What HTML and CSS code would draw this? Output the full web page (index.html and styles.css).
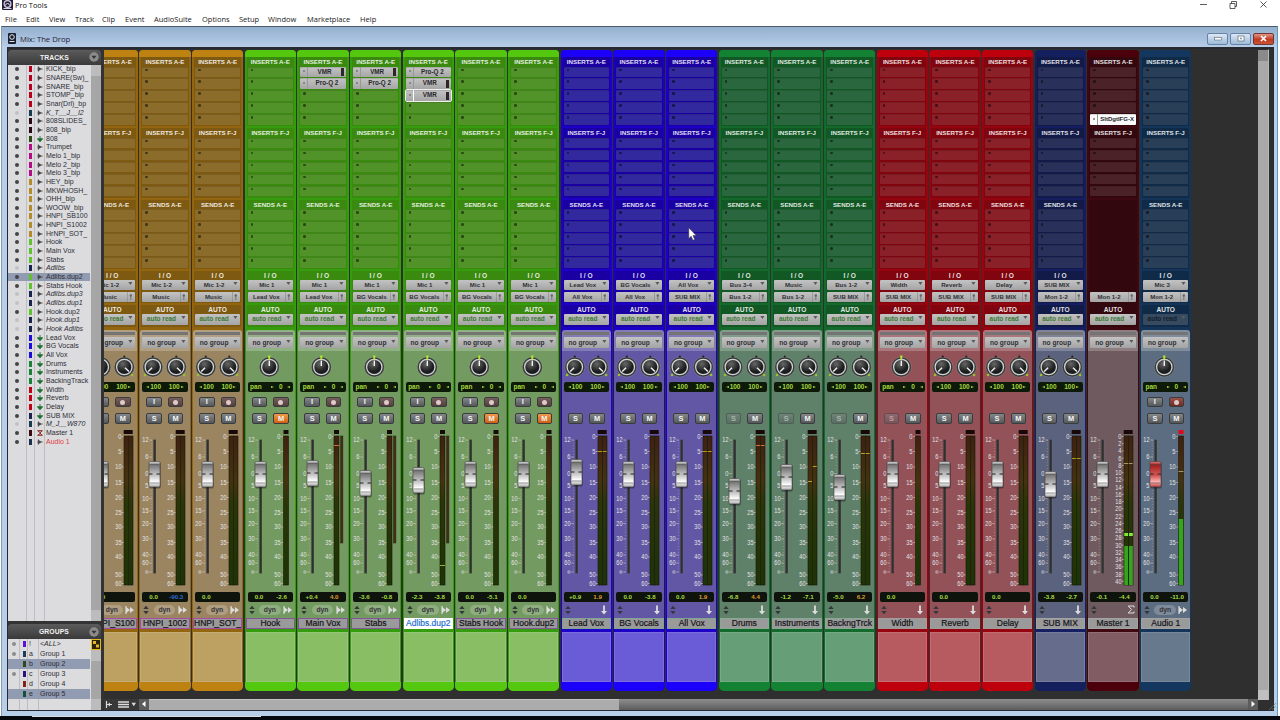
FILE: index.html
```html
<!DOCTYPE html>
<html lang="en">
<head>
<meta charset="utf-8">
<title>Pro Tools</title>
<link rel="stylesheet" href="styles.css">
</head>
<body>
<header class="app-title">
  <svg class="app-icon" width="11" height="11" viewBox="0 0 11 11"><rect width="11" height="11" rx="1" fill="#241f38"/><circle cx="5.5" cy="5" r="3.4" fill="none" stroke="#d8d4e6" stroke-width="1.2"/><path d="M3.5 6.5a2 2 0 0 1 4 0M1.5 9.5h8" stroke="#d8d4e6" fill="none"/></svg>
  <span>Pro Tools</span>
  <svg class="app-controls" width="72" height="10" viewBox="0 0 72 10" fill="none" stroke="#333" stroke-width=".8"><path d="M1 4.5h7M31 3.5h5v5h-5zM32.5 3.5v-2h5v5h-1.5M61.500 1.500l6 6M67.500 1.500l-6 6"/></svg>
</header>
<nav class="menu">
  <span>File</span><span>Edit</span><span>View</span><span>Track</span><span>Clip</span><span>Event</span><span>AudioSuite</span><span>Options</span><span>Setup</span><span>Window</span><span>Marketplace</span><span>Help</span>
</nav>
<main class="window">
  <div class="titlebar">
    <svg width="8" height="11" viewBox="0 0 8 11"><rect width="8" height="11" rx="1" fill="#1b2030"/><circle cx="4" cy="4" r="2.3" fill="none" stroke="#dfe6f0"/><path d="M1.500 8.500h5" stroke="#dfe6f0"/></svg>
    <span>Mix: The Drop</span>
    <div class="wbtns">
      <i class="wbtn"><svg width="8" height="5"><rect x=".5" y="1.500" width="7" height="2.500" fill="#fff" stroke="#567" stroke-width=".6"/></svg></i>
      <i class="wbtn"><svg width="8" height="7"><rect x="1" y="1" width="6" height="5" fill="#fff" stroke="#567" stroke-width=".7"/><rect x="3" y="2.700" width="2" height="1.600" fill="#89a"/></svg></i>
      <i class="wbtn close"><svg width="7" height="7"><path d="M1 1l5 5M6 1l-5 5" stroke="#fff" stroke-width="1.700"/></svg></i>
    </div>
  </div>
  <div class="content">
    <aside class="side">
      <div class="side-head">TRACKS<svg width="10" height="10"><circle cx="5" cy="5" r="4.700" fill="#8b8b8b"/><path d="M2.500 3.700h5L5 7z" fill="#333"/></svg></div>
      <div class="list tracks"><div class="rows" id="tracks"></div><div class="sb"><b></b><em></em></div></div>
      <div class="side-head groups-head">GROUPS<svg width="10" height="10"><circle cx="5" cy="5" r="4.700" fill="#8b8b8b"/><path d="M2.500 3.700h5L5 7z" fill="#333"/></svg></div>
      <div class="list groups"><div class="rows" id="groups"></div><div class="sb"><svg width="10" height="11"><rect width="10" height="11" fill="#e5b91c"/><path d="M1 1h8v9H1z" fill="#2b230a"/><path d="M2 2h3v3H2zM5 5.500h3v3H5z" fill="#e5b91c"/></svg><b></b><em></em></div></div>
    </aside>
    <section class="mixer">
      <div class="strips-view"><div class="strips" id="strips"></div></div>
      <div class="hbar">
        <svg width="34" height="11" viewBox="0 0 34 11"><path d="M1.500 2v7M2 5.500h5" stroke="#ddd" stroke-width="1.200"/><path d="M2.500 5.500l2.500-2v4z" fill="#ddd"/><path d="M13 3h11M13 5.500h11M13 8h11" stroke="#ddd" stroke-width="1.500"/><path d="M26.500 3.700h4.500l-2.200 3.600z" fill="#ddd"/></svg>
        <i class="arr"><svg width="10" height="10"><path d="M6.500 2v6L3 5z" fill="#fff"/></svg></i>
        <i class="thumb"></i><i class="rail"></i>
        <i class="arr"><svg width="10" height="10"><path d="M3.500 2v6L7 5z" fill="#fff"/></svg></i>
      </div>
    </section>
    <div class="vbar"><i></i><b></b></div>
    <div class="grip"><svg width="7" height="8"><path d="M0 8L7 1M3 8l4-4" stroke="#777" stroke-width=".6"/></svg></div>
  </div>
</main>
<footer class="taskbar"><i></i></footer>
<svg class="cursor" width="9" height="14" viewBox="0 0 9 14"><path d="M.8.8v10.700l2.400-2.300 1.700 4 1.800-.8-1.700-3.800h3.200z" fill="#fff" stroke="#333" stroke-width=".5"/></svg>
<script src="app.js"></script>
</body>
</html>
```
FILE: styles.css
```css
* { box-sizing: border-box; }
body { margin: 0; width: 1280px; height: 720px; overflow: hidden; background: #fff; font-family: "Liberation Sans", Arial, sans-serif; display: flex; flex-direction: column; }
svg { display: block; flex: none; }
i { font-style: normal; }

.app-title { height: 12px; flex: none; display: flex; align-items: flex-start; padding-left: 2px; font: 8px/10px "Open Sans", "Noto Sans", sans-serif; color: #111; }
.app-icon { margin-top: -1px; }
.app-title span { margin-left: 2px; width: 100px; font-size: 7.400px; }
.app-controls { margin-left: auto; margin-right: 9px; }
.menu { height: 14px; flex: none; display: grid; grid-template-columns: 21px 23px 26px 27px 23px 29px 48px 37px 29px 39px 53px 30px; padding-left: 5px; font: 7.500px/14px "Open Sans", "Noto Sans", sans-serif; color: #222; }

.window { height: 690px; flex: none; margin: 0 2px 0 1px; border-top: 1px solid #4c5a69; border-left: 1px solid #8a9bb0; border-right: 1px solid #5c9cb8; background: #b8cfe9; padding: 0 3px 5px 5px; display: flex; flex-direction: column; }
.titlebar { height: 20px; flex: none; display: flex; align-items: center; margin: 0 -3px 0 -5px; padding: 3px 3px 0 6px; background: linear-gradient(#94b0cf, #b7cce7); font: 7.700px/12px "Open Sans", "Noto Sans", sans-serif; color: #223; }
.titlebar span { margin-left: 4px; }
.wbtns { margin-left: auto; display: flex; gap: 2px; }
.wbtn { width: 21px; height: 12px; border: 1px solid #6683a5; border-radius: 2px; background: linear-gradient(#dce8f5, #9ebad8); display: flex; align-items: center; justify-content: center; }
.wbtn.close { border-color: #743434; background: linear-gradient(#e09585, #c23920 55%, #c75536); }

.content { flex: 1; min-height: 0; display: grid; grid-template-columns: 96px 1154px 11px 1fr; background: #2f2f2f; border: 1px solid #262a30; border-top-width: 2px; }
.side { display: flex; flex-direction: column; padding-right: 3px; background: #333; min-height: 0; }
.side-head { height: 15.500px; flex: none; margin-top: .5px; border-radius: 4px 4px 0 0; background: linear-gradient(#5b5b5b, #3a3a3a); color: #f2f2f2; font-weight: bold; font-size: 6.800px; display: flex; align-items: center; justify-content: flex-end; gap: 20px; padding-right: 2px; letter-spacing: .1px; }
.groups-head { margin-top: 3px; height: 15px; }
.list { display: flex; overflow: hidden; background: #dcdcdf; }
.tracks { height: 556px; }
.groups { flex: 1; }
.rows { flex: 1; background: linear-gradient(90deg, transparent 18px, #bdbdc2 18px 19px, transparent 19px 26px, #bdbdc2 26px 27px, transparent 27px 36px, #bdbdc2 36px 37px, transparent 37px); }
.groups .rows { background: linear-gradient(90deg, transparent 11px, #bdbdc2 11px 12px, transparent 12px 19px, #bdbdc2 19px 20px, transparent 20px 30px, #bdbdc2 30px 31px, transparent 31px); }
.row { height: 8.670px; display: grid; grid-template-columns: 21px 8px 9px 1fr; align-items: center; font-size: 7px; line-height: 8px; color: #2c2c34; white-space: nowrap; }
.row svg { height: 6px; }
.row .dot { width: 4px; height: 4px; border-radius: 50%; background: #444; margin-left: 7px; }
.row .chip { width: 3px; height: 6px; }
.off { font-style: italic; }
.off .dot { background: #c2c2c6; }
.sel { background: #919bb1; margin-right: 1px; }
.armed span { color: #e23b3b; }
.grow { height: 10px; display: grid; grid-template-columns: 15px 6px 11px 1fr; align-items: center; font-size: 7px; line-height: 10px; color: #2c2c34; }
.grow .dot { width: 4px; height: 4px; border-radius: 50%; background: #8c8c90; margin-left: 4px; }
.grow .chip { width: 3px; height: 6px; }
.sb { width: 10px; background: #a6a6a6; display: flex; flex-direction: column; justify-content: space-between; }
.sb b, .sb em { height: 11px; background: #bcbcbf; }
.groups .sb b { margin-bottom: auto; }

.mixer { display: flex; flex-direction: column; min-width: 0; min-height: 0; background: #2f2f2f; }
.strips-view { height: 650px; flex: none; overflow: hidden; }
.strips { display: flex; margin-left: -17.300px; padding-top: 1px; width: 1120px; }
.strip { width: 51.180px; margin-right: 1.500px; height: 641px; flex: none; display: flex; flex-direction: column; background: var(--edge); border-radius: 4px 4px 5px 5px; overflow: hidden; }
.orange { --cap: #bd8211; --edge: #94650f; --sec: #7d5911; --slot: #8b6c2b; --low: #9b8561; --note: #bca163; --plate: #a74ba9; }
.lime { --cap: #54c80e; --edge: #349c0d; --sec: #3b8a10; --slot: #519328; --low: #739a60; --note: #89be65; --plate: #84549a; }
.blue { --cap: #1b00fa; --edge: #1c00c8; --sec: #1a00a2; --slot: #31299d; --low: #6157a5; --note: #6a5cd6; --plate: #7ea495; }
.green { --cap: #138233; --edge: #146a2d; --sec: #125824; --slot: #2b673e; --low: #5f8069; --note: #669e77; --plate: #86ab92; }
.red { --cap: #be000c; --edge: #96050f; --sec: #80050e; --slot: #8a2028; --low: #935158; --note: #b85b60; --plate: #a49a9b; }
.navy { --cap: #141f5e; --edge: #151e62; --sec: #121a48; --slot: #29315b; --low: #5b627e; --note: #666d8c; --plate: #a3a3a3; }
.maroon { --cap: #4b000b; --edge: #3f0710; --sec: #33070e; --slot: #4c2229; --low: #6f5a5f; --note: #815d63; --plate: #a3a3a3; }
.steel { --cap: #14375f; --edge: #14345a; --sec: #102b48; --slot: #293f57; --low: #5c6d81; --note: #67798c; --plate: #a3a3a3; }
.cap { height: 7px; flex: none; background: var(--cap); }
.sec { height: 71.400px; flex: none; margin: 0 2px; padding: 0 1px; background: var(--sec); border-bottom: 2px solid var(--edge); }
.sec.io { height: 33.500px; }
.sec.auto { height: 24px; }
.maroon .blank { background: var(--sec); border-color: var(--sec); }
.lab { height: 9.500px; line-height: 10px; text-align: center; font-weight: bold; font-size: 6.200px; color: rgba(255,255,255,.88); white-space: nowrap; }
.io .lab { height: 8.600px; font-size: 6.600px; }
.auto .lab { height: 9.600px; font-size: 6.600px; }
.slot { height: 10.400px; margin-bottom: 1.600px; background: var(--slot); border-radius: 1px; box-shadow: inset 0 1px 0 rgba(0,0,0,.12); padding: 2px 0 0 3px; }
.slot::before { content: ""; display: block; width: 2.600px; height: 2.600px; border-radius: 50%; background: rgba(0,0,0,.5); }
.slot.full { padding: 0; display: flex; align-items: center; background: linear-gradient(#c4c4c4, #a6a6a6); font-weight: bold; font-size: 6.300px; color: #28282c; white-space: nowrap; overflow: hidden; }
.slot.full::before { width: 2px; height: 2px; margin: -2px 2px 0 3px; background: #777; flex: none; }
.slot.full span { flex: 1; text-align: center; border-left: 1px solid #999; height: 100%; line-height: 10.500px; }
.slot.full u { width: 3px; height: 8px; background: #2c2626; margin-right: 2px; }
.slot.hot { outline: 1px solid #eee; }
.slot.hot span { border-left-color: #fff; }
.slot.white { background: #fafafa; font-size: 6px; }
.pick { height: 10.400px; margin-bottom: 1.600px; background: linear-gradient(#c3c3c3, #a4a4a4); border-radius: 1px; display: flex; align-items: center; font-size: 6.100px; font-weight: bold; color: #303036; white-space: nowrap; padding-right: 2px; }
.pick span { flex: 1; text-align: center; line-height: 10px; }
.pick.auto-mode { color: #3c7a33; font-size: 6.500px; }
.steel .auto-mode { background: #364a60; color: #14202e; }
.low { flex: none; height: 288px; margin: 1.100px 1px 0; background: var(--low); border-radius: 3px 3px 0 0; display: flex; flex-direction: column; }
.grp { height: 21px; margin-bottom: 1px; flex: none; padding: 2.500px 2px 0; background: rgba(255,255,255,.22); border-radius: 3px 3px 0 0; }
.grp hr { height: 2.500px; margin: 0 0 2.500px; border: 0; background: #747474; }
.grp .pick { height: 11px; font-size: 6.600px; }
.knobs { height: 30.500px; flex: none; }
.pan { height: 9.500px; flex: none; margin: 0 2px; border-radius: 2px; background: #0e1a08; color: #a5d83f; font-weight: bold; font-size: 6.500px; line-height: 10px; display: flex; justify-content: space-around; align-items: center; white-space: nowrap; }
.pan span { display: flex; align-items: center; gap: 1px; }
.tri { width: 0; height: 0; border: 1.800px solid transparent; }
.tri.l { border-right: 3px solid #a5d83f; border-left: 0; }
.tri.r { border-left: 3px solid #a5d83f; border-right: 0; }
.btns { height: 10.500px; flex: none; margin-top: 5px; display: flex; gap: 6px; padding-left: 6px; }
.btns.sm { margin-top: 6px; }
.btn { width: 15.500px; height: 10.500px; border: .6px solid #393b3d; border-radius: 2px; background: linear-gradient(#85888a, #55585b); color: #f4f4f4; font-size: 7.400px; font-weight: bold; line-height: 9.500px; text-align: center; display: flex; align-items: center; justify-content: center; }
.btn.rec { background: linear-gradient(#76605d, #523e3c); }
.btn.rec::before { content: ""; width: 5px; height: 5px; border-radius: 50%; background: #e0c9c9; }
.btn.rec.on { background: linear-gradient(#98534a, #6c2b24); }
.btn.mute { background: linear-gradient(#f09a4a, #cf5f14); }
.btn.dim { opacity: .45; }
.hid { visibility: hidden; }
.fader { height: 164.300px; flex: none; margin: 2.200px 0 0 -1px; }
.fader text { font-size: 7px; fill: #e4e4e4; }
.vals { height: 10px; flex: none; margin: 2px 2px 0; border-radius: 2px; background: #0e140c; color: #a5dc44; font-weight: bold; font-size: 6.200px; line-height: 10.500px; display: grid; grid-template-columns: 1fr 1fr; text-align: center; }
.vals .over { color: #dd9a34; }
.vals .low-v { color: #2f68d0; }
.foot { height: 15px; flex: none; display: flex; align-items: center; justify-content: space-between; padding: 0 3px; }
.foot span { width: 21.500px; height: 9.500px; margin-left: 2px; border-radius: 5px; background: rgba(255,255,255,.2); font-size: 6.800px; font-weight: bold; line-height: 9px; text-align: center; color: #34343a; }
.plate { height: 11px; flex: none; margin: 0 1px; border: 1px solid var(--plate); background: #9b9a9b; font-size: 8.500px; line-height: 9px; text-align: center; color: #141418; -webkit-text-stroke: .2px #141418; white-space: nowrap; overflow: hidden; display: flex; justify-content: center; }
.plate.cur { background: #fff; border-color: #fff; color: #2870d0; -webkit-text-stroke-color: #2870d0; }
.note { height: 50px; flex: none; margin: 3px 1px 0; background: var(--note); border: .5px solid rgba(255,255,255,.12); }
.tail { flex: 1; background: var(--cap); }

.hbar { height: 11px; flex: none; display: flex; padding-left: 1px; background: #383838; }
.arr { width: 10px; height: 11px; background: #5c5c5c; }
.thumb { width: 470px; background: #acacac; border-top: 1px solid #c3c3c3; }
.rail { flex: 1; background: linear-gradient(#8e8e8e, #5c5c5c); }
.vbar { height: 651px; background: #a9a9a9; border-top: 1px solid #2f2f2f; border-right: 1px solid #b9b9b9; display: flex; flex-direction: column; justify-content: space-between; }
.vbar i { height: 11px; background: #8a8a8a; }
.vbar b { height: 10px; background: #c0c0c0; }
.grip { display: flex; align-items: flex-end; justify-content: flex-end; }
.taskbar { height: 4px; flex: none; background: #05080c; padding-left: 32px; }
.taskbar i { display: block; width: 229px; height: 1px; background: #d8dce0; }
.cursor { position: absolute; left: 688px; top: 227px; }
```
FILE: app.js
```js
const tri = '<svg width="5" height="8"><path d="M.3 1h4.200L2.400 4z" fill="#5b5b5b"/></svg>';
const plug = '<svg width="6" height="10"><path d="M.3 0v10" stroke="#858585" stroke-width=".7"/><path d="M3.800 3v5" stroke="#666" stroke-width=".8"/><circle cx="3.800" cy="3.500" r="1.200" fill="#666"/></svg>';

// name, colour, kind (a = audio, x = aux, m = master), flags
const tracks = [
  ['KICK_bip','#b8001c','a'],['SNARE(Sw)_','#b8001c','a'],['SNARE_bip','#b8001c','a'],['STOMP_bip','#b8001c','a'],['Snar(Drl)_bp','#b8001c','a'],
  ['K_T__J__I2','#173a52','a','off'],['808SLIDES_','#2a0a12','a'],['808_bip','#2a0a12','a'],['808','#2b4a18','x'],
  ['Trumpet','#b50a86','a'],['Melo 1_bip','#b50a86','a'],['Melo 2_bip','#b50a86','a'],['Melo 3_bip','#b50a86','a'],
  ['HEY_bip','#b58a28','a'],['MKWHOSH_','#b58a28','a'],['OHH_bip','#b58a28','a'],['WOOW_bip','#b58a28','a'],['HNPI_SB100','#b58a28','a'],['HNPI_S1002','#b58a28','a'],['HrNPI_SOT_','#b58a28','a'],
  ['Hook','#5fc22c','a'],['Main Vox','#5fc22c','a'],['Stabs','#5fc22c','a'],['Adlibs','#18244e','a','off'],['Adlibs.dup2','#5fc22c','a','sel'],['Stabs Hook','#5fc22c','a'],
  ['Adlibs.dup3','#18244e','a','off'],['Adlibs.dup1','#18244e','a','off'],['Hook.dup2','#5fc22c','a'],['Hook.dup1','#18244e','a','off'],['Hook Adlibs','#18244e','a','off'],
  ['Lead Vox','#1c0cdc','x'],['BG Vocals','#1c0cdc','x'],['All Vox','#1c0cdc','x'],['Drums','#1a8038','x'],['Instruments','#1a8038','x'],['BackingTrack','#1a8038','x'],
  ['Width','#c00014','x'],['Reverb','#c00014','x'],['Delay','#c00014','x'],['SUB MIX','#18244e','x'],['M_J__W870','#173a52','a','off'],['Master 1','#3a0a12','m'],['Audio 1','#18304e','a','armed']
];
const kind = {
  a: '<svg width="6" height="6"><path d="M1.300 .5v5" stroke="#333" stroke-width=".9"/><path d="M0 3h6M1.500 1.300L4.500 3l-3 1.700z" fill="#444" stroke="#444" stroke-width=".5"/></svg>',
  x: '<svg width="6" height="6"><path d="M3 0v5M.3 2.700h5.400L3 5.800z" fill="#1f7030" stroke="#1f7030" stroke-width=".9"/></svg>',
  m: '<svg width="6" height="6"><path d="M.3.7h5.400M.3 5.300h5.400M1 1l3 2-3 2M5 1L2.500 3 5 5" stroke="#8a2a24" fill="none"/></svg>'
};
document.getElementById('tracks').innerHTML = tracks.map(([n, c, k, f = '']) =>
  `<div class="row ${f}"><i class="dot"></i><i class="chip" style="background:${c}"></i>${kind[k]}<span>${n}</span></div>`).join('');
document.getElementById('groups').innerHTML = [['!','&lt;ALL&gt;','#5a10d8',1],['a','Group 1','#1c3c5c',1],['b','Group 2','#2c4a20',0,'sel'],['c','Group 3','#2a1080',1],['d','Group 4','#842018',0],['e','Group 5','#14503c',0,'sel']].map(([l, n, c, d, s = '']) =>
  `<div class="grow ${s}"><i class="${d ? 'dot' : ''}"></i><i class="chip" style="background:${c}"></i><span>${l}</span><span${l === '!' ? ' class="off"' : ''}>${n}</span></div>`).join('');

// n name, c colour, in/out routing, p pan (1 = mono knob), b input/record buttons, f fader centre, v values
const strips = [
  {n:'HNPI_S100',c:'orange',i:'Mic 1-2',o:'Music',b:1,f:474,v:['0.0','']},
  {n:'HNPI_1002',c:'orange',i:'Mic 1-2',o:'Music',b:1,f:474,v:['0.0','-90.3']},
  {n:'HNPI_SOT_',c:'orange',i:'Mic 1-2',o:'Music',b:1,f:474,v:['0.0','']},
  {n:'Hook',c:'lime',i:'Mic 1',o:'Lead Vox',p:1,b:1,mute:1,f:474,v:['0.0','-2.6']},
  {n:'Main Vox',c:'lime',i:'Mic 1',o:'Lead Vox',p:1,b:1,f:473,v:['+0.4','4.0'],ins:['VMR|','Pro-Q 2'],gr:1,pk:[[445,0,'#d07038']]},
  {n:'Stabs',c:'lime',i:'Mic 1',o:'BG Vocals',p:1,b:1,f:483,v:['-3.6','-0.8'],ins:['VMR|','Pro-Q 2'],gr:1},
  {n:'Adlibs.dup2',c:'lime',i:'Mic 1',o:'BG Vocals',p:1,b:1,f:480,v:['-2.3','-3.8'],ins:['Pro-Q 2','VMR|','VMR|*'],gr:1,cur:1,pk:[[565,0,'#a0b030']]},
  {n:'Stabs Hook',c:'lime',i:'Mic 1',o:'BG Vocals',p:1,b:1,mute:1,f:474,v:['0.0','-5.1']},
  {n:'Hook.dup2',c:'lime',i:'Mic 1',o:'BG Vocals',p:1,b:1,mute:1,f:474,v:['0.0','']},
  {n:'Lead Vox',c:'blue',i:'Lead Vox',o:'All Vox',f:472,v:['+0.9','1.9'],pk:[[451,0,'#b89a20'],[451,1,'#b89a20']]},
  {n:'BG Vocals',c:'blue',i:'BG Vocals',o:'All Vox',f:474,v:['0.0','-3.8']},
  {n:'All Vox',c:'blue',i:'All Vox',o:'SUB MIX',f:474,v:['0.0','1.9'],pk:[[451,0,'#b89a20'],[451,1,'#b89a20']]},
  {n:'Drums',c:'green',i:'Bus 3-4',o:'Bus 1-2',dim:1,f:491,v:['-6.8','4.4'],pk:[[445,0,'#d07038'],[445,1,'#d07038']]},
  {n:'Instruments',c:'green',i:'Music',o:'Bus 1-2',dim:1,f:477,v:['-1.2','-7.1'],pk:[[481,0,'#c0a020'],[466,1,'#c0a020']]},
  {n:'BackngTrck',c:'green',i:'Bus 1-2',o:'SUB MIX',dim:1,f:487,v:['-5.0','6.2'],pk:[[453,0,'#c0a020'],[453,1,'#c0a020']]},
  {n:'Width',c:'red',i:'Width',o:'SUB MIX',p:1,dim:1,f:474,v:['0.0','']},
  {n:'Reverb',c:'red',i:'Reverb',o:'SUB MIX',f:474,v:['0.0','']},
  {n:'Delay',c:'red',i:'Delay',o:'SUB MIX',f:474,v:['0.0','']},
  {n:'SUB MIX',c:'navy',i:'SUB MIX',o:'Mon 1-2',f:484,v:['-3.8','-2.7'],pk:[[458,0,'#a89a20'],[458,1,'#a89a20']]},
  {n:'Master 1',c:'maroon',o:'Mon 1-2',master:1,f:474,v:['-0.1','-4.4'],ins:['','','','','SltDgtlFG-X'],pk:[[463,0,'#a89a60'],[463,1,'#a89a60']],lvl:546},
  {n:'Audio 1',c:'steel',i:'Mic 3',o:'Mon 1-2',p:1,b:1,rec:1,f:474,v:['0.0','-11.0'],pk:[[471,0,'#a89a60']],lvl:519}
];
const slots = (a = []) => [0, 1, 2, 3, 4].map(k => {
  const t = a[k];
  if (!t) return '<div class="slot"></div>';
  return `<div class="slot full ${t.includes('*') ? 'hot' : ''} ${t.startsWith('Slt') ? 'white' : ''}"><span>${t.replace(/[|*]/g, '')}</span>${t.includes('|') ? '<u></u>' : ''}</div>`;
}).join('');
const sec = (l, a) => `<div class="sec"><div class="lab">${l}</div>${slots(a)}</div>`;

const knob = (x, a) => {
  const r = a * Math.PI / 180, s = Math.sin(r), c = -Math.cos(r);
  return `<circle cx="${x}" cy="15" r="10" fill="#383b39" stroke="rgba(255,255,255,.25)" stroke-width=".6"/><circle cx="${x}" cy="15" r="7.700" fill="url(#kg)" stroke="#d0d3d3" stroke-width="1.300"/>
  <path d="M${x + s} ${15 + c}L${x + s * 6.5} ${15 + c * 6.5}" stroke="#f4f4f4" stroke-width="1.400"/>` +
  (a ? `<circle cx="${x + s * 11}" cy="23" r="1.300" fill="#9ac32c"/><circle cx="${x}" cy="4.500" r="1.100" fill="#222"/>` : `<path d="M${x - 1.2} 3.500h2.400l-.4 4h-1.600z" fill="#b2e82a"/>`);
};
const left = [[12,440],[6,457],[0,473.500],[5,485.500],[10,498.500],[15,511],[20,523.500],[30,539],[40,555],[60,563],['∞',572]];
const right = [[0,436.500],[5,451.500],[10,467],[15,482.500],[20,497.500],[25,512.500],[30,527],[35,542.500],[40,557],[50,575],[60,583.500]];
// scale figures are set condensed, right-aligned to x
const figure = (x, y, t) => {
  const w = String(t).length > 1 ? 6.2 : 3.2;
  return `<text x="${x - w}" y="${y}" textLength="${w}" lengthAdjust="spacingAndGlyphs">${t}</text>`;
};
function fader(s) {
  const Y = y => y - 426, mono = s.p, mx = mono ? (s.gr ? 37 : 38.5) : 37;
  let o = `<svg class="fader" width="51" height="164.300" viewBox="0 0 51 164.300">`;
  o += left.map(([t, y]) => figure(9.5, Y(y) + 2.5, t) + `<path d="M10.300 ${Y(y)}h2.500" stroke="#ddd" stroke-width=".5"/>`).join('');
  o += `<path d="M12.300 14V146" stroke="#ddd" stroke-opacity=".5" stroke-dasharray=".6 2.200"/><rect x="14.300" y="13.500" width="2.600" height="134" fill="${s.c === 'lime' && !s.gr ? '#2c3428' : '#303030'}" stroke="rgba(255,255,255,.12)" stroke-width=".5"/>`;
  const rs = s.master ? Array.from({length: 21}, (_, k) => [k * 2, 436.5 + k * 7.24]) : right;
  o += rs.map(([t, y]) => figure(mono && !s.gr ? 35.5 : 34.5, Y(y) + 2.5, t) + `<path d="M${mx - 2} ${Y(y)}h2" stroke="#ddd" stroke-width=".6"/>`).join('');
  const w = mono ? 5 : 9;
  o += `<rect x="${mono ? mx : mx - .3}" y="4" width="${w}" height="4" fill="${s.rec ? '#e00a1c' : '#170908'}"/>`;
  for (let k = 0; k < (mono ? 1 : 2); k++) {
    const x = mx + k * 4.7;
    o += `<rect x="${x}" y="10" width="${mono ? 5 : 4.3}" height="149" fill="url(#mg)" stroke="#151a08" stroke-width=".6"/>`;
    if (s.lvl) o += `<rect x="${x + .3}" y="${Y(s.lvl)}" width="${mono ? 4.4 : 3.8}" height="${585 - s.lvl}" fill="#36a51e"/>`;
    if (s.master) o += `<rect x="${x + .3}" y="107" width="3.800" height="3" fill="#82ea32"/>`;
    for (const [y, ch, c] of s.pk || []) if (ch === k) o += `<path d="M${x} ${Y(y) + .5}h${mono ? 5 : 4}" stroke="${c}"/>`;
  }
  if (s.gr) o += `<rect x="43.500" y="10" width="2.400" height="107" fill="#402d18" stroke="#27290f" stroke-width=".5"/>`;
  const y = Y(s.f) - 12.5;
  return o + `<g transform="translate(10 ${y})"><rect x=".5" y="1" width="11.200" height="26" rx="1.500" fill="#000" opacity=".35"/><rect width="11" height="25.500" rx="1.200" fill="url(#${s.rec ? 'fr' : 'fg'})" stroke="#3c3c3c" stroke-width=".6"/><path d="M.8 3h9.400M.8 21.500h9.400" stroke="#444" stroke-opacity=".65" stroke-width=".8"/><path d="M0 12.500h3.500M7.500 12.500h3.500" stroke="#222" stroke-width="1.200"/></g></svg>`;
}
const defs = `<svg width="0" height="0" style="position:absolute"><defs>
<radialGradient id="kg" cx=".4" cy=".3"><stop offset="0" stop-color="#666"/><stop offset="1" stop-color="#1c1d1e"/></radialGradient>
<linearGradient id="mg" x2="0" y2="1"><stop offset="0" stop-color="#3f2010"/><stop offset=".3" stop-color="#453210"/><stop offset=".45" stop-color="#2a3508"/><stop offset="1" stop-color="#1e3306"/></linearGradient>
<linearGradient id="fg" x2="0" y2="1"><stop offset="0" stop-color="#ddd"/><stop offset=".14" stop-color="#777"/><stop offset=".47" stop-color="#bbb"/><stop offset=".52" stop-color="#bdbdbd"/><stop offset=".8" stop-color="#fff"/><stop offset="1" stop-color="#aaa"/></linearGradient>
<linearGradient id="fr" x2="0" y2="1"><stop offset="0" stop-color="#e08080"/><stop offset=".14" stop-color="#a02020"/><stop offset=".47" stop-color="#d05050"/><stop offset=".52" stop-color="#c84848"/><stop offset=".8" stop-color="#ffb4b4"/><stop offset="1" stop-color="#b84040"/></linearGradient></defs></svg>`;
const icons = {
  ud: '<svg width="6" height="10"><path d="M3 .8L5.700 4H.3zM3 9.200L5.700 6H.3z" fill="#33363a"/></svg>',
  a: '<svg width="9" height="8"><path d="M1 0v8" stroke="#ddd" stroke-width="1.200"/><path d="M1 1l4 3-4 3zM5 1l4 3-4 3z" fill="#ddd"/></svg>',
  x: '<svg width="8" height="10"><path d="M4 .5v6" stroke="#ddd" stroke-width="1.800"/><path d="M1 6h6L4 9.500z" fill="#ddd"/></svg>',
  m: '<svg width="8" height="9"><path d="M7 2.500V1H1.200L4.500 4.500 1.200 8H7V6.500" fill="none" stroke="#ddd"/></svg>'
};
const L = '<i class="tri l"></i>', R = '<i class="tri r"></i>';
document.getElementById('strips').innerHTML = defs + strips.map(s => `<article class="strip ${s.c}">
<div class="cap"></div>
${sec('INSERTS A-E', s.ins)}${sec('INSERTS F-J')}
${s.master ? '<div class="sec blank"></div>' : sec('SENDS A-E')}
<div class="sec io ${s.master ? 'blank' : ''}"><div class="lab">${s.master ? '&nbsp;' : 'I / O'}</div>
<div class="pick ${s.master ? 'hid' : ''}"><span>${s.i || ''}</span>${tri}</div><div class="pick"><span>${s.o}</span>${plug}</div></div>
<div class="sec auto"><div class="lab">AUTO</div><div class="pick auto-mode"><span>auto read</span>${tri}</div></div>
<div class="low">
<div class="grp"><hr><div class="pick"><span>no group</span>${tri}</div></div>
<svg class="knobs" width="49" height="30.500">${s.master ? '' : s.p ? knob(23.3, 0) : knob(12.8, -135) + knob(36.3, 135)}</svg>
${s.master ? '<div class="pan hid"></div>' : `<div class="pan">${s.p ? `pan<span></span>${R}0${L}` : `<span>${L}100</span><span>100${R}</span>`}</div>`}
<div class="btns ${s.b ? '' : 'hid'}"><i class="btn">I</i><i class="btn rec ${s.rec ? 'on' : ''}"></i></div>
<div class="btns sm ${s.master ? 'hid' : ''}"><i class="btn ${s.dim ? 'dim' : ''}">S</i><i class="btn ${s.mute ? 'mute' : ''}">M</i></div>
${fader(s)}
<div class="vals"><span>${s.v[0]}</span><span class="${s.v[1] === '-90.3' ? 'low-v' : s.v[1] && s.v[1][0] !== '-' ? 'over' : ''}">${s.v[1]}</span></div>
<div class="foot">${icons.ud}${s.b ? '<span>dyn</span>' + icons.a : s.master ? icons.m : icons.x}</div>
</div>
<div class="plate ${s.cur ? 'cur' : ''}">${s.n}</div>
<div class="note"></div><div class="tail"></div>
</article>`).join('');
```
